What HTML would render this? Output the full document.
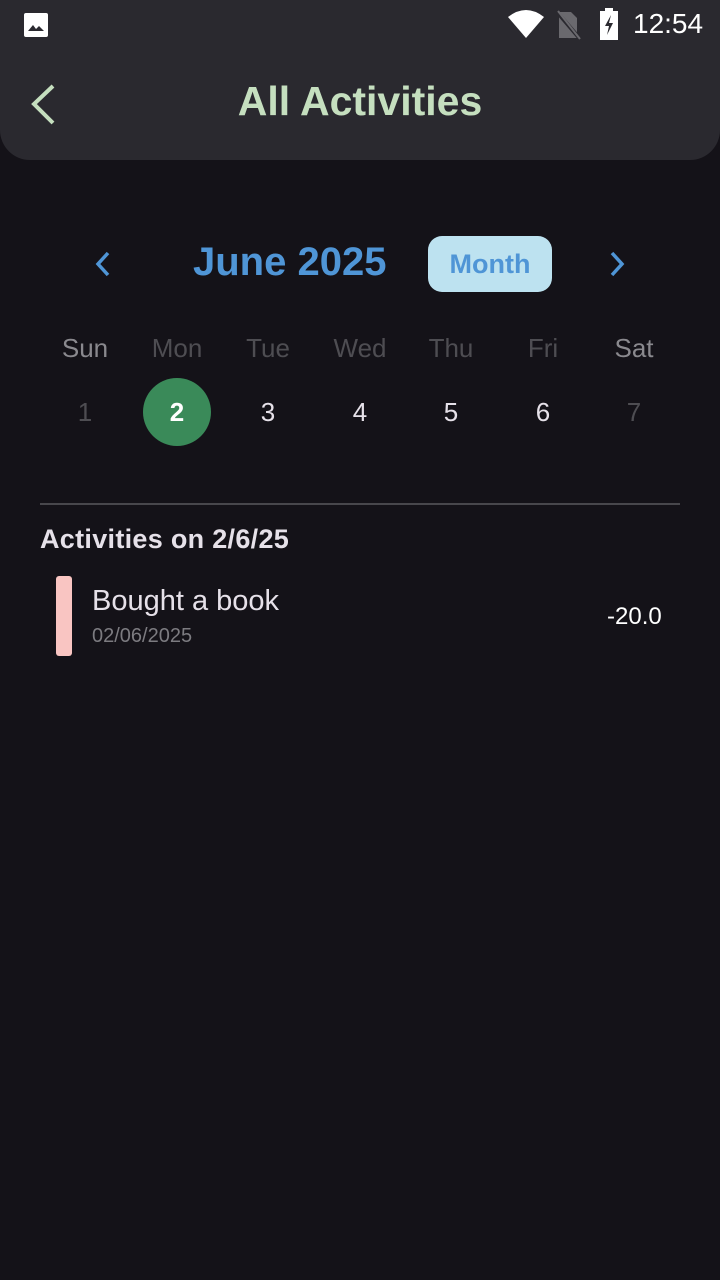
<!DOCTYPE html>
<html><head><meta charset="utf-8"><style>
*{margin:0;padding:0;box-sizing:border-box}
body{width:720px;height:1280px;background:#141218;font-family:"Liberation Sans",sans-serif;position:relative;overflow:hidden;color:#e6e1e9}
.a{position:absolute}
.hdr{left:0;top:0;width:720px;height:160px;background:#2a292f;border-radius:0 0 30px 30px}
.c{position:absolute;width:80px;margin-left:-40px;text-align:center}
</style></head><body>
<div class="a hdr"></div>
<svg class="a" style="left:23px;top:12px" width="26" height="26" viewBox="0 0 26 26"><rect x="1" y="1" width="24" height="24" rx="2" fill="#fff"/><path d="M5 19 L10 13 L13 17 L16 14 L21 19Z" fill="#2a292f"/></svg>
<svg class="a" style="left:507px;top:9px" width="38" height="30" viewBox="0 0 38 30"><path d="M1 8 Q19 -6 37 8 L19 29Z" fill="#fff"/></svg>
<svg class="a" style="left:555px;top:10px" width="30" height="30" viewBox="0 0 30 30"><path d="M4 2 H16 L22 8 V28 H4Z" fill="#6a696e"/><path d="M2 2 L26 30" stroke="#2a292f" stroke-width="4"/><path d="M3 1 L25 29" stroke="#6a696e" stroke-width="2"/></svg>
<svg class="a" style="left:598px;top:8px" width="22" height="32" viewBox="0 0 22 32"><rect x="7" y="0" width="8" height="4" fill="#fff"/><rect x="2" y="3" width="18" height="29" fill="#fff"/><path d="M13 7 L7 18 H11 L9 27 L15 15 H11Z" fill="#2a292f"/></svg>
<div class="a" style="left:633px;top:8px;font-size:28px;color:#fff">12:54</div>
<svg class="a" style="left:28px;top:84px" width="30" height="42" viewBox="0 0 30 42"><path d="M25 2 L6 20 L25 39" fill="none" stroke="#c5dfbf" stroke-width="4"/></svg>
<div class="a" style="left:0;width:720px;top:78px;text-align:center;font-size:41px;font-weight:bold;color:#c5dfbf">All Activities</div>
<svg class="a" style="left:92px;top:250px" width="24" height="28" viewBox="0 0 24 28"><path d="M16 3 L6 14 L16 25" fill="none" stroke="#4f95d6" stroke-width="3.5"/></svg>
<div class="a" style="left:193px;top:240px;font-size:40px;font-weight:bold;color:#4f95d6">June 2025</div>
<div class="a" style="left:428px;top:236px;width:124px;height:56px;border-radius:14px;background:#bde2f0;color:#4f95d6;font-size:27px;font-weight:bold;text-align:center;line-height:56px">Month</div>
<svg class="a" style="left:604px;top:250px" width="24" height="28" viewBox="0 0 24 28"><path d="M8 3 L18 14 L8 25" fill="none" stroke="#4f95d6" stroke-width="3.5"/></svg>
<div class="a" style="left:0;top:333px;font-size:26px;width:720px;height:40px">
<div class="c" style="left:85px;color:#8a898e">Sun</div><div class="c" style="left:177px;color:#4e4d52">Mon</div><div class="c" style="left:268px;color:#4e4d52">Tue</div><div class="c" style="left:360px;color:#4e4d52">Wed</div><div class="c" style="left:451px;color:#4e4d52">Thu</div><div class="c" style="left:543px;color:#4e4d52">Fri</div><div class="c" style="left:634px;color:#8a898e">Sat</div></div>
<div class="a" style="left:143px;top:378px;width:68px;height:68px;border-radius:50%;background:#3a8a59"></div>
<div class="a" style="left:0;top:397px;font-size:26px;width:720px;height:40px">
<div class="c" style="left:85px;color:#4e4d52">1</div><div class="c" style="left:177px;color:#fff;font-weight:bold">2</div><div class="c" style="left:268px">3</div><div class="c" style="left:360px">4</div><div class="c" style="left:451px">5</div><div class="c" style="left:543px">6</div><div class="c" style="left:634px;color:#4e4d52">7</div></div>
<div class="a" style="left:40px;top:503px;width:640px;height:2px;background:#48474c"></div>
<div class="a" style="left:40px;top:524px;font-size:27px;font-weight:bold;color:#e6e1e9;letter-spacing:0.3px">Activities on 2/6/25</div>
<div class="a" style="left:56px;top:576px;width:16px;height:80px;border-radius:3px;background:#f9c5c2"></div>
<div class="a" style="left:92px;top:585px;font-size:29px;color:#e6e1e9">Bought a book</div>
<div class="a" style="left:92px;top:625px;font-size:20px;color:#7c7b80">02/06/2025</div>
<div class="a" style="left:607px;top:603px;font-size:24px;color:#fff">-20.0</div>
</body></html>
